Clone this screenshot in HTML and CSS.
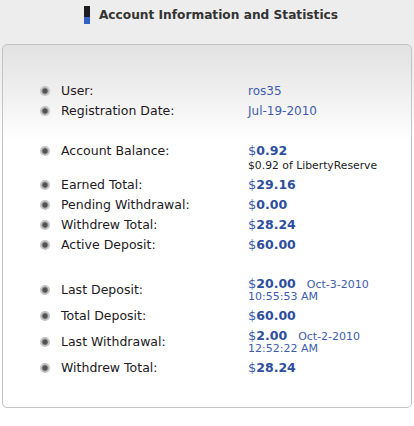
FILE: index.html
```html
<!DOCTYPE html>
<html>
<head>
<meta charset="utf-8">
<link rel="stylesheet" href="styles.css">
</head>
<body>
<div class="page">
  <div class="header">
    <span class="hicon"></span>
    <h1 class="title">Account Information and Statistics</h1>
  </div>
  <div class="panel">
    <div class="group g1">
      <div class="row"><span class="dot"></span><span class="label">User:</span><span class="val">ros35</span></div>
      <div class="row"><span class="dot"></span><span class="label">Registration Date:</span><span class="val">Jul-19-2010</span></div>
    </div>
    <div class="group g2">
      <div class="row top"><span class="dot"></span><span class="label">Account Balance:</span>
        <span class="val"><span class="money">$<b>0.92</b></span><span class="sub">$0.92 of LibertyReserve</span></span></div>
      <div class="row"><span class="dot"></span><span class="label">Earned Total:</span><span class="val money">$<b>29.16</b></span></div>
      <div class="row"><span class="dot"></span><span class="label">Pending Withdrawal:</span><span class="val money">$<b>0.00</b></span></div>
      <div class="row"><span class="dot"></span><span class="label">Withdrew Total:</span><span class="val money">$<b>28.24</b></span></div>
      <div class="row"><span class="dot"></span><span class="label">Active Deposit:</span><span class="val money">$<b>60.00</b></span></div>
    </div>
    <div class="group g3">
      <div class="row mid"><span class="dot"></span><span class="label">Last Deposit:</span>
        <span class="val"><span class="money">$<b>20.00</b></span><span class="date">Oct-3-2010</span><span class="time">10:55:53 AM</span></span></div>
      <div class="row"><span class="dot"></span><span class="label">Total Deposit:</span><span class="val money">$<b>60.00</b></span></div>
      <div class="row mid"><span class="dot"></span><span class="label">Last Withdrawal:</span>
        <span class="val"><span class="money">$<b>2.00</b></span><span class="date">Oct-2-2010</span><span class="time">12:52:22 AM</span></span></div>
      <div class="row"><span class="dot"></span><span class="label">Withdrew Total:</span><span class="val money">$<b>28.24</b></span></div>
    </div>
  </div>
</div>
</body>
</html>
```
FILE: styles.css
```css
html, body {
  margin: 0;
  padding: 0;
  background: #ffffff;
}
.page {
  width: 414px;
  height: 426px;
  font-family: "DejaVu Sans", Verdana, sans-serif;
  background: linear-gradient(#ededed 0px, #ededed 70px, #ffffff 140px);
  padding-top: 1px;
  box-sizing: border-box;
}
.header {
  display: flex;
  align-items: center;
  justify-content: center;
  height: 28px;
  gap: 9px;
  margin-left: 8px;
}
.hicon {
  width: 6px;
  height: 18px;
  background: linear-gradient(#1d1d22 0, #1d1d22 11px, #2f62c4 11px, #2f62c4 18px);
}
.title {
  margin: 0;
  font-size: 12.2px;
  font-weight: bold;
  color: #333;
}
.panel {
  margin: 15px 0 0 2px;
  width: 410px;
  height: 364px;
  box-sizing: border-box;
  border: 1px solid #c4c4c4;
  border-radius: 5px;
  background: linear-gradient(#e2e2e2 0px, #f0f0f0 50px, #ffffff 95px);
  padding: 36px 0 0 37px;
  display: flex;
  flex-direction: column;
}
.group.g2 { margin-top: 20px; }
.group.g3 { margin-top: 21px; }
.row {
  display: flex;
  align-items: center;
  min-height: 20px;
  font-size: 12.5px;
  color: #221822;
}
.row.top { align-items: flex-start; }
.row.top .dot { margin-top: 5px; }
.row.mid { padding: 1px 0 1px; }
.g3 .row + .row { margin-top: 2px; }
.dot {
  width: 10px;
  height: 10px;
  border-radius: 50%;
  box-sizing: border-box;
  background: radial-gradient(circle at 50% 50%, #4a4a4a 0, #5a5a5a 2.2px, #9a9a9a 3px, #d0d0d0 4px, #b8b8b8 5px);
  flex: none;
}
.label {
  margin-left: 11px;
  width: 187px;
  flex: none;
  line-height: 20px;
}
.val {
  display: flex;
  flex-wrap: wrap;
  align-items: baseline;
  color: #3e5cab;
  font-size: 12px;
}
.money {
  color: #3e5cab;
  font-size: 13px;
  line-height: 20px;
}
.money b {
  font-weight: bold;
  color: #2d4d9e;
  font-size: 12.5px;
}
.row.mid .money { line-height: 14px; }
.sub {
  flex-basis: 100%;
  font-size: 10.8px;
  line-height: 12px;
  color: #222;
  margin-top: -1px;
  margin-bottom: 3px;
}
.date {
  font-size: 11px;
  margin-left: 11px;
  color: #3e5cab;
}
.time {
  flex-basis: 100%;
  font-size: 11px;
  line-height: 12px;
  color: #3e5cab;
}
```
